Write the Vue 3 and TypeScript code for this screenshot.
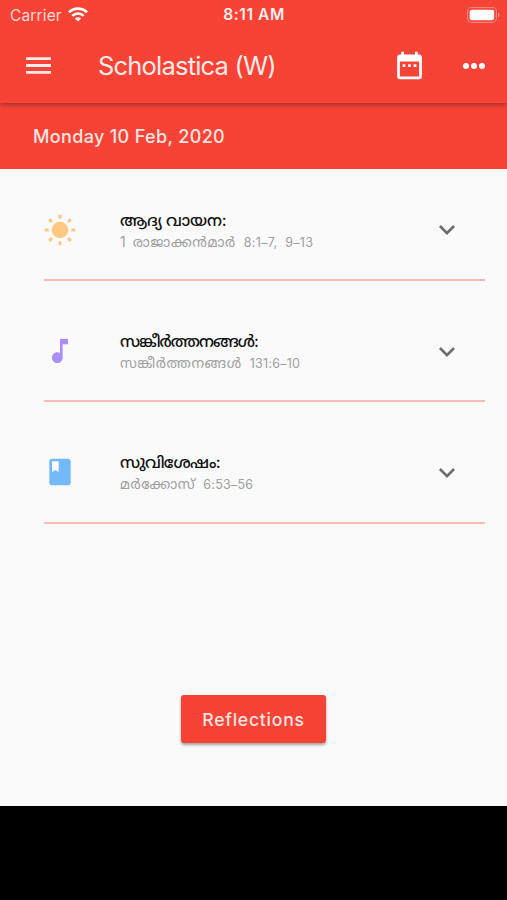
<script setup lang="ts">
interface Reading {
  icon: 'sun' | 'note' | 'book'
  title: string
  name: string
  verses: string
}

const readings: Reading[] = [
  { icon: 'sun', title: 'ആദ്യ വായന:', name: '1 രാജാക്കൻമാർ', verses: '8:1–7, 9–13' },
  { icon: 'note', title: 'സങ്കീർത്തനങ്ങൾ:', name: 'സങ്കീർത്തനങ്ങൾ', verses: '131:6–10' },
  { icon: 'book', title: 'സുവിശേഷം:', name: 'മർക്കോസ്', verses: '6:53–56' },
]

const rays: number[] = [0, 45, 90, 135, 180, 225, 270, 315]
</script>

<template>
  <div class="screen">
    <header class="top">
      <div class="status">
        <div class="carrier">
          <span>Carrier</span>
          <svg class="wifi" viewBox="0 0 20 15" fill="none" stroke="#fff" stroke-width="2.6">
            <path d="M1 5.3a12.8 12.8 0 0 1 18 0" />
            <path d="M4.3 8.9a8.1 8.1 0 0 1 11.4 0" />
            <path d="M10 14.6 6.9 11.5a4.4 4.4 0 0 1 6.2 0z" fill="#fff" stroke="none" />
          </svg>
        </div>
        <span class="time">8:11 AM</span>
        <svg class="battery" viewBox="0 0 33 16">
          <rect x="0.6" y="0.6" width="28.8" height="14.8" rx="4" fill="none" stroke="#fff" stroke-opacity=".4" />
          <rect x="2.6" y="2.7" width="24.6" height="10.6" rx="2.4" fill="#fff" />
          <path d="M31 5.6c1.9.8 1.9 4 0 4.8z" fill="#fff" fill-opacity=".45" />
        </svg>
      </div>
      <div class="bar">
        <svg class="menu" viewBox="3 6 18 12" fill="#ffebe9"><path d="M3 18h18v-2H3v2zm0-5h18v-2H3v2zm0-7v2h18V6H3z" /></svg>
        <h1>Scholastica (W)</h1>
        <svg class="calendar" viewBox="0 0 24 24" fill="#fff"><path d="M9 11H7v2h2v-2zm4 0h-2v2h2v-2zm4 0h-2v2h2v-2zm2-7h-1V2h-2v2H8V2H6v2H5c-1.11 0-1.99.9-1.99 2L3 20c0 1.1.89 2 2 2h14c1.1 0 2-.9 2-2V6c0-1.1-.9-2-2-2zm0 16H5V9h14v11z" /></svg>
        <svg class="more" viewBox="0 0 24 8" fill="#fff"><circle cx="4" cy="4" r="3" /><circle cx="12" cy="4" r="3" /><circle cx="20" cy="4" r="3" /></svg>
      </div>
    </header>
    <div class="date"><span>Monday 10 Feb, 2020</span></div>
    <main>
      <section v-for="r in readings" :key="r.icon" class="reading">
        <div class="lead">
          <svg v-if="r.icon === 'sun'" class="glyph" viewBox="-16 -16 32 32" fill="#ffc983">
            <circle r="8.3" />
            <rect v-for="a in rays" :key="a" x="-1.5" y="-15.3" width="3" height="4" rx=".6" :transform="`rotate(${a})`" />
          </svg>
          <svg v-else-if="r.icon === 'note'" class="glyph" viewBox="0 0 24 24" fill="#a98ffc">
            <path d="M12 3v10.55c-.59-.34-1.27-.55-2-.55-2.21 0-4 1.79-4 4s1.79 4 4 4 4-1.79 4-4V7h4V3h-6z" />
          </svg>
          <svg v-else class="glyph" viewBox="0 0 24 24" fill="#74bafa">
            <path d="M18 2H6c-1.1 0-2 .9-2 2v16c0 1.1.9 2 2 2h12c1.1 0 2-.9 2-2V4c0-1.1-.9-2-2-2zM6 4h5v8l-2.5-1.5L6 12V4z" />
          </svg>
        </div>
        <div class="words">
          <div class="title" :class="r.icon">{{ r.title }}</div>
          <div class="sub"><span class="name">{{ r.name }}</span><span class="verses" :class="r.icon">{{ r.verses }}</span></div>
        </div>
        <svg class="chevron" viewBox="6 8.59 12 7.41" fill="#6d6d6d"><path d="M16.59 8.59L12 13.17 7.41 8.59 6 10l6 6 6-6z" /></svg>
      </section>
      <button class="reflect" type="button">Reflections</button>
    </main>
    <footer class="below"></footer>
  </div>
</template>

<style>
body { margin: 0; background: #000; }
</style>

<style scoped>
.screen {
  width: 507px;
  height: 900px;
  display: flex;
  flex-direction: column;
  overflow: hidden;
  background: #fafafa;
  font-family: Inter, "Noto Sans Malayalam", "Noto Sans", sans-serif;
}
.top {
  position: relative;
  height: 103px;
  flex: none;
  background: #f64336;
  color: #fff;
  box-shadow: 0 2px 5px rgba(0, 0, 0, .32);
}
.status {
  height: 29px;
  display: grid;
  grid-template-columns: 1fr auto 1fr;
  align-items: center;
  padding: 0 7px 0 10px;
  box-sizing: border-box;
}
.carrier { display: flex; align-items: center; gap: 6px; font-size: 15.5px; color: #ffd9d5; letter-spacing: .15px; }
.carrier span { padding-top: 1px; }
.wifi { width: 20px; height: 15px; }
.time { font-size: 15.5px; font-weight: 600; color: #fff0ee; letter-spacing: .6px; margin-right: 2px; }
.battery { width: 33px; height: 16px; justify-self: end; }
.bar { display: flex; align-items: center; height: 73px; padding: 0 21px 0 26px; }
.menu { width: 25px; height: 17px; }
h1 { margin: 0 0 0 47px; flex: 1; font-size: 25.5px; font-weight: 400; letter-spacing: -.8px; color: #ffebe9; white-space: nowrap; }
.calendar { width: 33px; height: 33px; }
.more { width: 24px; height: 8px; margin-left: 36px; }
.date {
  height: 66px;
  flex: none;
  display: flex;
  align-items: center;
  padding-left: 33px;
  background: #f64336;
  color: #ffe5e1;
  font-size: 18px;
  font-weight: 500;
  letter-spacing: .35px;
}
main { height: 636.5px; flex: none; display: flex; flex-direction: column; }
.reading {
  flex: none;
  box-sizing: border-box;
  height: 121.3px;
  margin: 0 22px 0 44px;
  padding: 22px 30px 0 0;
  display: flex;
  align-items: center;
  border-bottom: 2px solid #f8bbb5;
}
.reading:first-child { height: 112px; padding-top: 12px; }
.lead { width: 32px; height: 32px; margin: 0 44px 1px 0; }
.glyph { display: block; width: 32px; height: 32px; }
.words { flex: 1; white-space: nowrap; padding-top: 1px; }
.title { font-size: 16px; font-weight: 500; line-height: 23px; color: #111; }
.title.sun { letter-spacing: -.1px; }
.title.note { letter-spacing: -.95px; }
.title.book { letter-spacing: -.75px; }
.sub { display: flex; align-items: baseline; gap: 8px; font-size: 12.5px; line-height: 20px; color: #9f9f9f; }
.name { font-size: 13.8px; letter-spacing: .6px; word-spacing: 2px; }
.verses { letter-spacing: .25px; }
.verses.sun { letter-spacing: .3px; word-spacing: 4px; }
.chevron { width: 16px; height: 10px; }
.reflect {
  margin: 171.5px auto 0;
  width: 145px;
  height: 48px;
  padding: 0;
  border: 0;
  border-radius: 3px;
  background: #f64336;
  color: #ffe5e1;
  font: 500 17.6px Inter, sans-serif;
  letter-spacing: .75px;
  box-shadow: 0 2px 3px rgba(0, 0, 0, .35);
}
.below { flex: 1; background: #000; }
</style>
